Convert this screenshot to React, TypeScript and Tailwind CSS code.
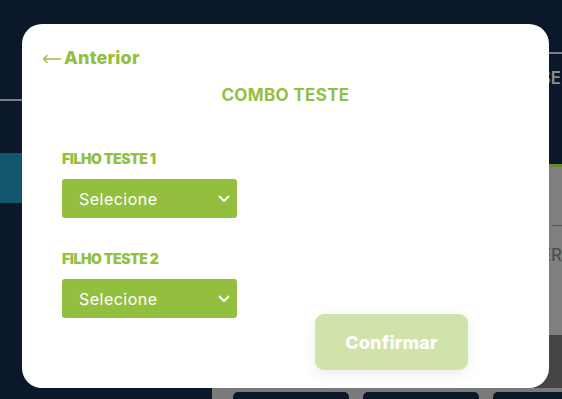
import React from 'react';

const font = { fontFamily: 'Inter, "Noto Sans", sans-serif' };

const Chevron: React.FC = () => (
  <svg width="12" height="8" viewBox="0 0 12 8" fill="none" className="shrink-0">
    <path d="M1.5 1.5 6 6l4.5-4.5" stroke="white" strokeWidth="2" strokeLinecap="round" strokeLinejoin="round" />
  </svg>
);

const SelectField: React.FC<{ label: string }> = ({ label }) => (
  <div className="flex flex-col">
    <span className="text-[14px] leading-4 font-black tracking-[-0.03em] text-[#93c03f] uppercase">{label}</span>
    <div className="mt-[12px] flex h-[39px] w-[175px] items-center justify-between rounded-[3px] bg-[#93bf3f] pl-[17px] pr-[7px]">
      <span className="text-[16px] font-normal tracking-[0.03em] text-white">Selecione</span>
      <Chevron />
    </div>
  </div>
);

const App: React.FC = () => {
  return (
    <div className="relative h-[399px] w-[562px] overflow-hidden bg-[#0b1829]" style={font}>
      {/* page behind the modal */}
      <div className="flex h-full">
        <div className="flex w-[212px] flex-col">
          <div className="h-[99px]" />
          <div className="h-[2px] bg-[#7c7c7c]" />
          <div className="h-[52px]" />
          <div className="h-[50px] bg-[#12576d]" />
        </div>
        <div className="flex flex-1 flex-col">
          <div className="h-[52px]" />
          <div className="h-[2px] bg-[#7c7c7c]" />
          <div className="flex h-[110px] justify-end pt-[12px] pr-[1px]">
            <span className="text-[17px] font-semibold text-[#8a8a8a]">SE</span>
          </div>
          <div className="h-[3px] bg-[#6a8a2a]" />
          <div className="flex h-[168px] flex-col bg-[#7f7f7f]">
            <div className="mt-[58px] ml-auto h-px w-[10px] bg-[#555]" />
            <div className="mt-[17px] flex justify-end">
              <span className="text-[17px] text-[#4a4a4a]">ER</span>
            </div>
          </div>
          <div className="h-[53px] bg-[#454545]" />
          <div className="flex flex-1 gap-[14px] bg-[#7a7a7a] pt-[4px] pl-[21px]">
            <div className="w-[116px] rounded-t-[5px] bg-[#0b1829]" />
            <div className="w-[116px] rounded-t-[5px] bg-[#0b1829]" />
            <div className="flex-1 rounded-tl-[5px] bg-[#0b1829]" />
          </div>
        </div>
      </div>

      {/* modal */}
      <div className="absolute left-[22px] top-[24px] flex h-[364px] w-[527px] flex-col rounded-[20px] bg-white">
        <div className="flex items-center pl-[20px] pt-[21px] text-[#93c03f]">
          <svg width="20" height="10" viewBox="0 0 20 10" fill="none" className="mt-[2px]">
            <path d="M19 5H1.5M5.5 1 1.5 5l4 4" stroke="#93c03f" strokeWidth="1.3" />
          </svg>
          <span className="ml-[2px] text-[18px] leading-[25px] font-extrabold tracking-[0.01em]">Anterior</span>
        </div>
        <h2 className="mt-[13px] text-center text-[17px] leading-[24px] font-bold tracking-[0.02em] text-[#93c03f]">COMBO TESTE</h2>
        <div className="mt-[44px] flex flex-col gap-[33px] pl-[40px]">
          <SelectField label="Filho teste 1" />
          <SelectField label="Filho teste 2" />
        </div>
        <div className="mt-[-4px] flex pl-[293px]">
          <button className="h-[56px] w-[153px] rounded-[9px] bg-[#cfe3aa] text-[18px] font-extrabold tracking-[0.01em] text-white shadow-[0_4px_14px_rgba(0,0,0,0.08)]">
            Confirmar
          </button>
        </div>
      </div>
    </div>
  );
};

export default App;
